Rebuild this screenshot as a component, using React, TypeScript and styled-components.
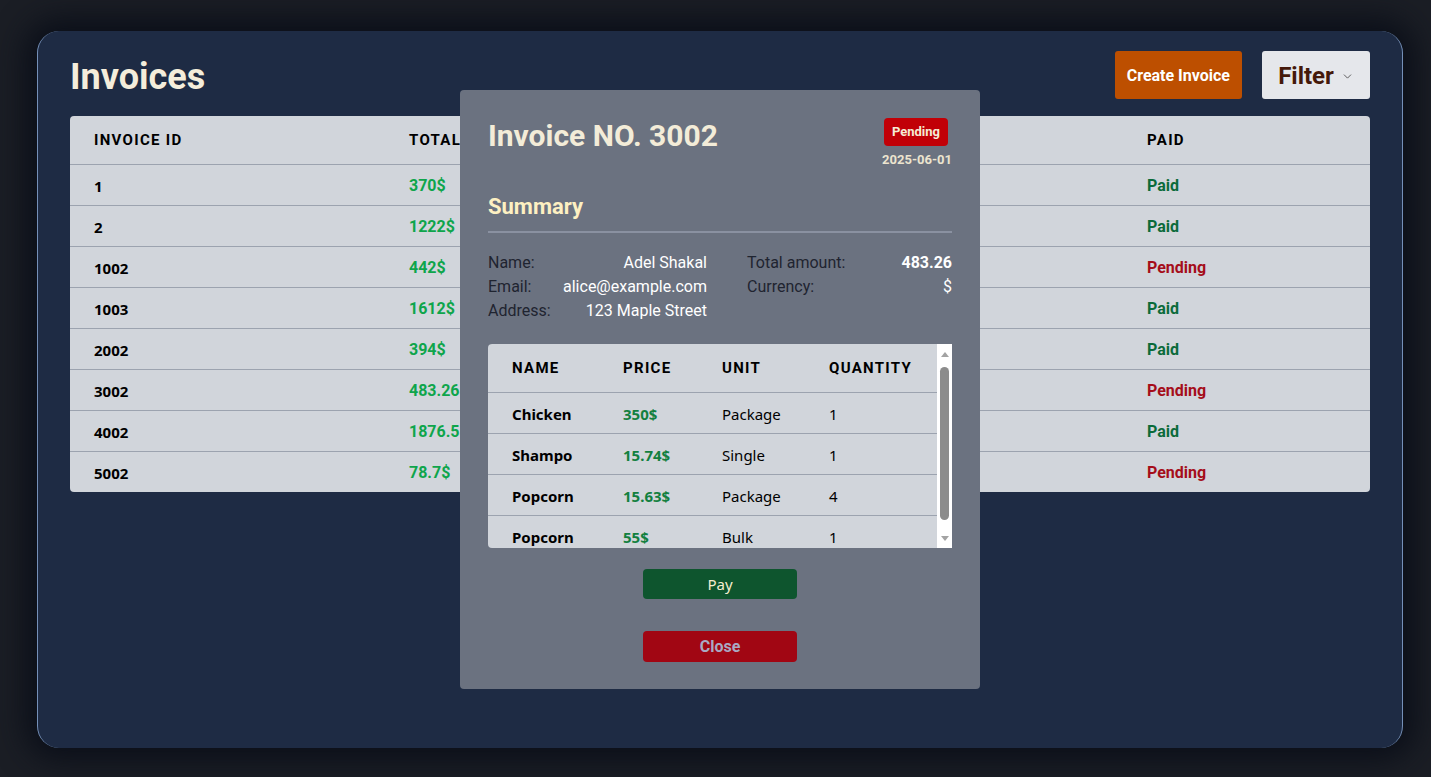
import React from "react";
import styled, { createGlobalStyle } from "styled-components";
import { ChevronDown } from "lucide-react";

const Global = createGlobalStyle`
  html, body { margin: 0; padding: 0; }
  body {
    background: #1b1e25;
    font-family: Roboto, "Liberation Sans", sans-serif;
    overflow: hidden;
  }
  * { box-sizing: border-box; }
`;

const Page = styled.div`
  height: 777px;
  padding: 31px 28px 29px 37px;
`;

const Panel = styled.main`
  height: 100%;
  background: #1e2b44;
  border-radius: 22px;
  border-left: 1px solid #7590b8;
  border-right: 1px solid #7590b8;
  box-shadow: 0 0 30px 12px #0b0f19;
  padding: 20px 32px 0 32px;
`;

const Header = styled.header`
  height: 48px;
  display: flex;
  align-items: center;
  justify-content: space-between;
`;

const Title = styled.h1`
  margin: 0;
  padding-top: 3px;
  font-size: 36px;
  font-weight: 700;
  color: #f4eddb;
`;

const Actions = styled.div`
  display: flex;
  gap: 20px;
  height: 100%;
`;

const CreateButton = styled.button`
  height: 48px;
  padding: 0 12px;
  border: none;
  border-radius: 3px;
  background: #bd4f00;
  color: #fff;
  font-family: Roboto, sans-serif;
  font-weight: 700;
  font-size: 16px;
`;

const FilterButton = styled.button`
  height: 48px;
  width: 108px;
  display: flex;
  align-items: center;
  justify-content: center;
  gap: 7px;
  padding-top: 2px;
  border: none;
  border-radius: 3px;
  background: #e5e7eb;
  color: #44190a;
  font-family: Roboto, sans-serif;
  font-weight: 700;
  font-size: 24px;
  svg { color: #4a4a4a; margin-top: 2px; }
`;

const Table = styled.div`
  margin-top: 17px;
  background: #d1d5db;
  border-radius: 4px;
  overflow: hidden;
`;

const Row = styled.div<{ $head?: boolean }>`
  display: grid;
  grid-template-columns: 315px 369px 369px 247px;
  height: ${(p) => (p.$head ? "48px" : "41px")};
  align-items: center;
  border-top: ${(p) => (p.$head ? "none" : "1px solid #9ca3af")};
`;

const HeadCell = styled.div`
  padding-left: 24px;
  font-weight: 700;
  font-size: 15px;
  letter-spacing: 1.3px;
  color: #000;
`;

const IdCell = styled.div`
  padding-left: 24px;
  padding-top: 1px;
  font-family: "Noto Sans", "Open Sans", sans-serif;
  font-weight: 700;
  font-size: 15px;
  color: #000;
`;

const MoneyCell = styled.div`
  padding-left: 24px;
  font-weight: 700;
  font-size: 16px;
  color: #0ea54b;
`;

const PlainCell = styled.div`
  padding-left: 24px;
  font-size: 15px;
  color: #111;
`;

const StatusCell = styled.div<{ $paid: boolean }>`
  padding-left: 24px;
  font-weight: 700;
  font-size: 16px;
  color: ${(p) => (p.$paid ? "#0b6b3a" : "#a50d1a")};
`;

/* Modal */
const Modal = styled.section`
  position: fixed;
  left: 460px;
  top: 90px;
  width: 520px;
  height: 599px;
  padding: 28px;
  background: #6b7280;
  border-radius: 4px;
  display: flex;
  flex-direction: column;
`;

const ModalHead = styled.div`
  display: flex;
  justify-content: space-between;
  align-items: flex-start;
  height: 50px;
`;

const ModalTitle = styled.h2`
  margin: 0;
  font-size: 30px;
  line-height: 36px;
  font-weight: 700;
  color: #f3ecd8;
`;

const Meta = styled.div`
  display: flex;
  flex-direction: column;
  align-items: flex-end;
  gap: 6px;
`;

const Badge = styled.span`
  height: 28px;
  line-height: 28px;
  padding: 0 8px;
  margin-right: 4px;
  border-radius: 4px;
  background: #c10007;
  color: #f5ecd6;
  font-size: 13px;
  font-weight: 700;
`;

const DateText = styled.span`
  font-size: 13px;
  line-height: 16px;
  font-weight: 700;
  color: #ece4cf;
`;

const SectionTitle = styled.h3`
  margin: 26px 0 0;
  padding-bottom: 11px;
  border-bottom: 2px solid #8a91a1;
  font-size: 22px;
  line-height: 26px;
  font-weight: 700;
  color: #fdf0c2;
`;

const InfoGrid = styled.div`
  margin-top: 18px;
  display: grid;
  grid-template-columns: 219px 205px;
  column-gap: 40px;
`;

const InfoCol = styled.div`
  display: flex;
  flex-direction: column;
`;

const InfoRow = styled.div`
  display: flex;
  justify-content: space-between;
  height: 24px;
  line-height: 24px;
  font-size: 16px;
`;

const Label = styled.span`
  color: #1f2430;
`;

const Value = styled.span<{ $bold?: boolean }>`
  color: #fff;
  font-weight: ${(p) => (p.$bold ? 700 : 400)};
`;

const ItemsBox = styled.div`
  margin-top: 21px;
  height: 204px;
  flex-shrink: 0;
  display: flex;
  background: #d1d5db;
  border-radius: 4px 0 0 4px;
  overflow: hidden;
`;

const ItemsArea = styled.div`
  flex: 1;
  overflow: hidden;
`;

const ItemRow = styled.div<{ $head?: boolean }>`
  display: grid;
  grid-template-columns: 135px 99px 107px 1fr;
  height: ${(p) => (p.$head ? "48px" : "41px")};
  align-items: center;
  border-top: ${(p) => (p.$head ? "none" : "1px solid #9ca3af")};
`;

const ItemHead = styled.div`
  padding-left: 24px;
  font-weight: 700;
  font-size: 15px;
  letter-spacing: 1.3px;
  color: #000;
  &:not(:first-child) { padding-left: 0; }
`;

const ItemCell = styled.div<{ $kind?: "name" | "price" | "plain" }>`
  padding-left: ${(p) => (p.$kind === "name" ? "24px" : "0")};
  padding-top: 1px;
  font-family: "Noto Sans", "Open Sans", sans-serif;
  font-size: 15px;
  font-weight: ${(p) => (p.$kind === "plain" ? 400 : 700)};
  color: ${(p) => (p.$kind === "price" ? "#13803f" : "#000")};
`;

const Scrollbar = styled.div`
  width: 15px;
  background: #ffffff;
  display: flex;
  flex-direction: column;
  align-items: center;
`;

const Arrow = styled.div`
  height: 20px;
  width: 100%;
  display: flex;
  align-items: center;
  justify-content: center;
`;

const Thumb = styled.div`
  margin-top: 3px;
  width: 9px;
  height: 153px;
  border-radius: 5px;
  background: #8c8c8c;
`;

const Spacer = styled.div`
  flex: 1;
`;

const ActionButton = styled.button<{ $variant: "pay" | "close" }>`
  align-self: center;
  flex-shrink: 0;
  width: 154px;
  height: ${(p) => (p.$variant === "pay" ? "30px" : "31px")};
  margin-top: ${(p) => (p.$variant === "pay" ? "21px" : "32px")};
  border: none;
  border-radius: 4px;
  background: ${(p) => (p.$variant === "pay" ? "#0e552e" : "#a10613")};
  color: ${(p) => (p.$variant === "pay" ? "#f5edd0" : "#a9a9c3")};
  font-family: ${(p) =>
    p.$variant === "pay" ? '"Noto Sans", "Open Sans", sans-serif' : "Roboto, sans-serif"};
  font-weight: ${(p) => (p.$variant === "pay" ? 400 : 700)};
  font-size: ${(p) => (p.$variant === "pay" ? "15px" : "16px")};
  padding: 0;
`;

const invoices = [
  { id: "1", total: "370$", date: "2025-01-12", paid: true },
  { id: "2", total: "1222$", date: "2025-02-03", paid: true },
  { id: "1002", total: "442$", date: "2025-03-18", paid: false },
  { id: "1003", total: "1612$", date: "2025-04-07", paid: true },
  { id: "2002", total: "394$", date: "2025-05-21", paid: true },
  { id: "3002", total: "483.26$", date: "2025-06-01", paid: false },
  { id: "4002", total: "1876.5$", date: "2025-06-14", paid: true },
  { id: "5002", total: "78.7$", date: "2025-07-02", paid: false },
];

const items = [
  { name: "Chicken", price: "350$", unit: "Package", qty: "1" },
  { name: "Shampo", price: "15.74$", unit: "Single", qty: "1" },
  { name: "Popcorn", price: "15.63$", unit: "Package", qty: "4" },
  { name: "Popcorn", price: "55$", unit: "Bulk", qty: "1" },
];

const Tri = ({ up }: { up?: boolean }) => (
  <svg width="8" height="5" viewBox="0 0 8 5">
    <polygon points={up ? "0,5 8,5 4,0" : "0,0 8,0 4,5"} fill="#a3a3a3" />
  </svg>
);

export default function App() {
  return (
    <>
      <Global />
      <Page>
        <Panel>
          <Header>
            <Title>Invoices</Title>
            <Actions>
              <CreateButton>Create Invoice</CreateButton>
              <FilterButton>
                Filter <ChevronDown size={13} strokeWidth={1.6} />
              </FilterButton>
            </Actions>
          </Header>
          <Table>
            <Row $head>
              <HeadCell>INVOICE ID</HeadCell>
              <HeadCell>TOTAL</HeadCell>
              <HeadCell>DATE</HeadCell>
              <HeadCell>PAID</HeadCell>
            </Row>
            {invoices.map((inv) => (
              <Row key={inv.id}>
                <IdCell>{inv.id}</IdCell>
                <MoneyCell>{inv.total}</MoneyCell>
                <PlainCell>{inv.date}</PlainCell>
                <StatusCell $paid={inv.paid}>{inv.paid ? "Paid" : "Pending"}</StatusCell>
              </Row>
            ))}
          </Table>
        </Panel>
      </Page>
      <Modal>
        <ModalHead>
          <ModalTitle>Invoice NO. 3002</ModalTitle>
          <Meta>
            <Badge>Pending</Badge>
            <DateText>2025-06-01</DateText>
          </Meta>
        </ModalHead>
        <SectionTitle>Summary</SectionTitle>
        <InfoGrid>
          <InfoCol>
            <InfoRow>
              <Label>Name:</Label>
              <Value>Adel Shakal</Value>
            </InfoRow>
            <InfoRow>
              <Label>Email:</Label>
              <Value>alice@example.com</Value>
            </InfoRow>
            <InfoRow>
              <Label>Address:</Label>
              <Value>123 Maple Street</Value>
            </InfoRow>
          </InfoCol>
          <InfoCol>
            <InfoRow>
              <Label>Total amount:</Label>
              <Value $bold>483.26</Value>
            </InfoRow>
            <InfoRow>
              <Label>Currency:</Label>
              <Value>$</Value>
            </InfoRow>
          </InfoCol>
        </InfoGrid>
        <ItemsBox>
          <ItemsArea>
            <ItemRow $head>
              <ItemHead>NAME</ItemHead>
              <ItemHead>PRICE</ItemHead>
              <ItemHead>UNIT</ItemHead>
              <ItemHead>QUANTITY</ItemHead>
            </ItemRow>
            {items.map((it, i) => (
              <ItemRow key={i}>
                <ItemCell $kind="name">{it.name}</ItemCell>
                <ItemCell $kind="price">{it.price}</ItemCell>
                <ItemCell $kind="plain">{it.unit}</ItemCell>
                <ItemCell $kind="plain">{it.qty}</ItemCell>
              </ItemRow>
            ))}
          </ItemsArea>
          <Scrollbar>
            <Arrow>
              <Tri up />
            </Arrow>
            <Thumb />
            <Spacer />
            <Arrow>
              <Tri />
            </Arrow>
          </Scrollbar>
        </ItemsBox>
        <ActionButton $variant="pay">Pay</ActionButton>
        <ActionButton $variant="close">Close</ActionButton>
      </Modal>
    </>
  );
}
